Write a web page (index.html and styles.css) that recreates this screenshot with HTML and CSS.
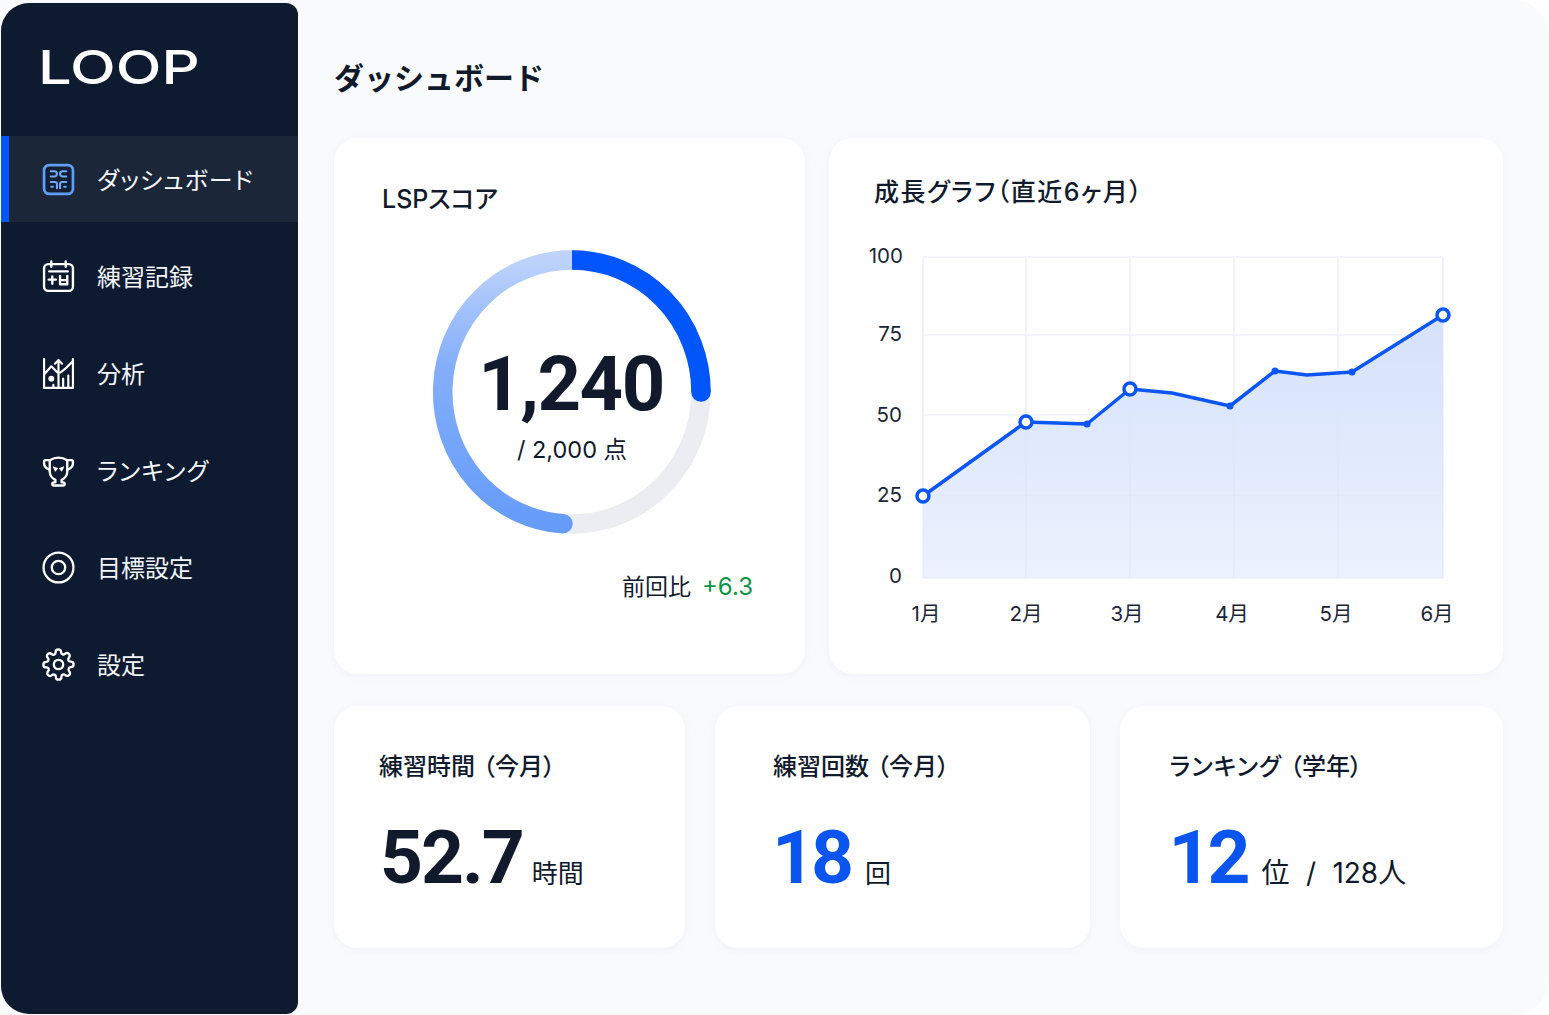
FILE: index.html
```html
<!DOCTYPE html>
<html lang="ja">
<head>
  <meta charset="UTF-8">
  <title>LOOP ダッシュボード</title>
  <link rel="stylesheet" href="styles.css">
</head>
<body>

<div class="app">
  <aside class="sidebar">
    <div class="logo"><span class="logo-text">LOOP</span></div>
    <nav class="nav">
      <a class="nav-item active">
        <svg class="nav-icon" viewBox="0 0 32 32" fill="none" stroke="#6ea8fa" stroke-width="2" stroke-linecap="round">
          <rect x="2" y="2" width="28" height="28" rx="5" fill="#141f33" stroke="#5f9ff8" stroke-width="2.600"/>
          <path d="M8.500 8h3.500a2.500 2.500 0 0 1 0 5H8.500M23.500 8h-3.500a2.500 2.500 0 0 0 0 5h3.500"/>
          <path d="M8.500 18.500h4a2 2 0 0 1 2 2v4M23.500 18.500h-4a2 2 0 0 0-2 2v4M9 23h1.500M23 23h-1.500"/>
        </svg>
        <span class="kana">ダッシュボード</span>
      </a>
      <a class="nav-item">
        <svg class="nav-icon" viewBox="0 0 32 32" fill="none" stroke="#fff" stroke-width="2.300" stroke-linecap="round" stroke-linejoin="round">
          <rect x="2" y="4" width="28" height="26" rx="4"/>
          <path d="M9 1.500v5M23 1.500v5M7 11h18M6.500 19h7M10 16v7M17.500 15.500v8h7v-8M17.500 19.500h7"/>
        </svg>
        <span>練習記録</span>
      </a>
      <a class="nav-item">
        <svg class="nav-icon" viewBox="0 0 32 32" fill="none" stroke="#fff" stroke-width="2.100" stroke-linecap="round" stroke-linejoin="round">
          <path d="M2 2v28h28V2M2 17l7-8 6 6M16 30V3M12.500 6.500L16 3l3.500 3.500M18 15l6-5 6-6"/>
          <circle cx="9" cy="21" r="1.800" fill="#fff"/>
          <path d="M20.500 30V21M25.500 30V18M11 30v-3"/>
        </svg>
        <span>分析</span>
      </a>
      <a class="nav-item">
        <svg class="nav-icon" viewBox="0 0 32 32" fill="none" stroke="#fff" stroke-width="2.300" stroke-linecap="round" stroke-linejoin="round">
          <path d="M7.500 6q8.500-5 17 0v11c0 4-3 7-5.500 8v2.500h1.500a1.500 1.500 0 0 1 0 3h-9a1.500 1.500 0 0 1 0-3H13V25c-2.500-1-5.500-4-5.500-8z"/>
          <path d="M7.500 6H3.500a1.500 1.500 0 0 0-1.500 1.500V9c0 3 2 5 5.500 6.500M24.500 6h4a1.500 1.500 0 0 1 1.500 1.500V9c0 3-2 5-5.500 6.500"/>
          <path d="M11 12.500l4 1.500-2 2.500zM21 12.500l-4 1.500 2 2.500z" fill="#fff" stroke-width="1"/>
        </svg>
        <span class="kana">ランキング</span>
      </a>
      <a class="nav-item">
        <svg class="nav-icon" viewBox="0 0 32 32" fill="none" stroke="#fff" stroke-width="2.200">
          <circle cx="16" cy="16" r="14.500"/>
          <circle cx="16" cy="16" r="6.500"/>
        </svg>
        <span>目標設定</span>
      </a>
      <a class="nav-item">
        <svg class="nav-icon" viewBox="0 0 24 24" fill="none" stroke="#fff" stroke-width="1.700" stroke-linecap="round" stroke-linejoin="round">
          <circle cx="12" cy="12" r="3.400"/>
          <path d="M19.400 15a1.650 1.650 0 0 0 .33 1.820l.06.06a2 2 0 1 1-2.830 2.830l-.06-.06a1.650 1.650 0 0 0-2.800 1.170V21a2 2 0 0 1-4 0v-.09a1.650 1.650 0 0 0-2.800-1.170l-.06.06a2 2 0 1 1-2.830-2.830l.06-.06a1.650 1.650 0 0 0-1.170-2.800H3a2 2 0 0 1 0-4h.09a1.650 1.650 0 0 0 1.170-2.800l-.06-.06a2 2 0 1 1 2.830-2.830l.06.06a1.650 1.650 0 0 0 2.800-1.170V3a2 2 0 0 1 4 0v.09a1.650 1.650 0 0 0 2.800 1.170l.06-.06a2 2 0 1 1 2.830 2.830l-.06.06a1.650 1.650 0 0 0 1.170 2.800H21a2 2 0 0 1 0 4h-.09a1.650 1.650 0 0 0-1.510 1.110z"/>
        </svg>
        <span>設定</span>
      </a>
    </nav>
  </aside>

  <main class="main">
    <h1 class="page-title">ダッシュボード</h1>

    <div class="row-top">
      <section class="card score-card">
        <h2 class="card-title">LSPスコア</h2>
        <div class="ring">
          <svg class="ring-svg" width="280" height="288" viewBox="0 0 280 288" fill="none" stroke-width="19.500">
            <defs>
              <linearGradient id="ringGrad" x1="0" y1="0" x2="0" y2="1">
                <stop offset="0" stop-color="#bdd3fb"/>
                <stop offset="0.4" stop-color="#84aefa"/>
                <stop offset="1" stop-color="#659cfa"/>
              </linearGradient>
            </defs>
            <ellipse cx="140" cy="143" rx="129" ry="132" stroke="#ecedf2"/>
            <path d="M131 274.700A129 132 0 0 1 140 11" stroke="url(#ringGrad)" stroke-linecap="round"/>
            <path d="M140 11A129 132 0 0 1 269 143" stroke="#0055fb"/>
            <circle cx="269" cy="143" r="9.750" fill="#0055fb"/>
          </svg>
          <div class="ring-text">
            <div class="ring-value">1,240</div>
            <div class="ring-max">/ 2,000 点</div>
          </div>
        </div>
        <div class="delta">前回比<span class="delta-num">+6.3</span></div>
      </section>

      <section class="card chart-card">
        <h2 class="card-title">成長グラフ（直近6ヶ月）</h2>
        <svg class="chart" width="674" height="400" viewBox="829 240 674 400">
          <defs>
            <linearGradient id="areaGrad" x1="0" y1="0" x2="0" y2="1">
              <stop offset="0" stop-color="#d5e1fb"/>
              <stop offset="1" stop-color="#ecf2fe"/>
            </linearGradient>
          </defs>
          <path d="M923 496L1026 422L1087 424L1130 389L1172 393L1230 406L1275 371L1307 375L1352 372L1443 315V578H923Z" fill="url(#areaGrad)"/>
          <g stroke="#dfe6f6" stroke-width="1.200" opacity="0.75">
            <path d="M923 257H1443M923 335H1443M923 415H1443M923 495H1443M923 578H1443"/>
            <path d="M923 257V578M1026 257V578M1130 257V578M1234 257V578M1338 257V578M1443 257V578"/>
          </g>
          <path d="M923 496L1026 422L1087 424L1130 389L1172 393L1230 406L1275 371L1307 375L1352 372L1443 315" fill="none" stroke="#0b56f5" stroke-width="3.500" stroke-linejoin="round"/>
          <g fill="#0b56f5">
            <circle cx="1087" cy="424" r="3.500"/>
            <circle cx="1230" cy="406" r="3.500"/>
            <circle cx="1275" cy="371" r="3.500"/>
            <circle cx="1352" cy="372" r="3.500"/>
          </g>
          <g fill="#fff" stroke="#0b56f5" stroke-width="3.500">
            <circle cx="923" cy="496" r="6"/>
            <circle cx="1026" cy="422" r="6"/>
            <circle cx="1130" cy="389" r="6"/>
            <circle cx="1443" cy="315" r="6"/>
          </g>
          <g class="axis-y" text-anchor="end">
            <text x="903" y="263">100</text>
            <text x="902" y="341">75</text>
            <text x="902" y="422">50</text>
            <text x="902" y="502">25</text>
            <text x="902" y="583">0</text>
          </g>
          <g class="axis-x" text-anchor="middle">
            <text x="926" y="621">1月</text>
            <text x="1026" y="621">2月</text>
            <text x="1127" y="621">3月</text>
            <text x="1232" y="621">4月</text>
            <text x="1336" y="621">5月</text>
            <text x="1437" y="621">6月</text>
          </g>
        </svg>
      </section>
    </div>

    <div class="row-bottom">
      <section class="card stat-card">
        <h2 class="stat-title">練習時間<span class="paren">（今月）</span></h2>
        <div class="stat-body"><span class="stat-num">52.7</span><span class="stat-unit">時間</span></div>
      </section>
      <section class="card stat-card stat-two">
        <h2 class="stat-title">練習回数<span class="paren">（今月）</span></h2>
        <div class="stat-body"><span class="stat-num blue">18</span><span class="stat-unit">回</span></div>
      </section>
      <section class="card stat-card stat-three">
        <h2 class="stat-title"><span class="kana">ランキング</span><span class="paren">（学年）</span></h2>
        <div class="stat-body"><span class="stat-num blue">12</span><span class="stat-unit wide">位 / 128人</span></div>
      </section>
    </div>
  </main>
</div>

</body>
</html>
```

FILE: styles.css
```css
* {
  box-sizing: border-box;
}

html, body {
  margin: 0;
  height: 100%;
  background: #fff;
}

body {
  font-family: Inter, "Noto Sans CJK JP", sans-serif;
  font-feature-settings: "palt";
  color: #111a2c;
  overflow: hidden;
}

.kana {
  letter-spacing: 1.1px;
}

.paren {
  padding: 0 4px 0 8px;
}

.app {
  display: flex;
  width: 1549px;
  height: 1015px;
  background: #f9fafc;
  border-radius: 0 36px 36px 0;
  padding: 3px 0 1px 1px;
}

/* sidebar */
.sidebar {
  width: 297px;
  flex-shrink: 0;
  background: #0e1a2f;
  border-radius: 28px 12px 12px 28px;
}

.logo {
  height: 133px;
  padding: 36px 0 0 37px;
  color: #fff;
  font-size: 47px;
  font-weight: 500;
  line-height: 56px;
}

.logo-text {
  display: inline-block;
  transform: scaleX(1.27);
  transform-origin: left center;
}

.nav {
  display: flex;
  flex-direction: column;
  gap: 11px;
}

.nav-item {
  height: 86px;
  display: flex;
  align-items: center;
  gap: 22px;
  padding-left: 41px;
  color: #f4f6fa;
  font-size: 24px;
  line-height: 32px;
  border-left: 0 solid #0055fb;
}

.nav-item span {
  margin-top: 4px;
}

.nav-item.active {
  background: #1b2639;
  border-left-width: 8px;
  padding-left: 33px;
}

.nav-icon {
  width: 33px;
  height: 33px;
  flex-shrink: 0;
}

/* main */
.main {
  flex: 1;
  padding: 0 46px 0 36px;
}

.page-title {
  margin: 0;
  height: 135px;
  padding-top: 53px;
  font-size: 30px;
  line-height: 44px;
  font-weight: 700;
  font-feature-settings: normal;
}

.row-top {
  display: grid;
  grid-template-columns: 471px 674px;
  gap: 24px;
  height: 536px;
  margin-bottom: 32px;
}

.row-bottom {
  display: grid;
  grid-template-columns: 351px 374.5px 383.5px;
  gap: 30px;
  height: 242px;
}

.card {
  background: #fff;
  border-radius: 24px;
  box-shadow: 0 2px 10px rgba(30, 50, 90, 0.04);
}

.card-title {
  margin: 0;
  font-size: 25px;
  line-height: 36px;
  font-weight: 500;
}

/* score */
.score-card {
  padding: 43px 52px 0 48px;
}

.ring {
  display: grid;
  width: 280px;
  margin: 32px 0 0 50px;
}

.ring-svg, .ring-text {
  grid-area: 1 / 1;
}

.ring-text {
  text-align: center;
  padding-top: 90px;
}

.ring-value {
  font-family: Roboto, sans-serif;
  font-size: 76px;
  line-height: 90px;
  font-weight: 700;
  letter-spacing: -1.5px;
  margin-left: -2px;
}

.ring-max {
  font-size: 23.5px;
  line-height: 34px;
  margin-top: 4px;
}

.delta {
  text-align: right;
  font-size: 23px;
  line-height: 34px;
  margin-top: 33px;
}

.delta-num {
  color: #0c9444;
  margin-left: 11px;
  font-size: 24px;
}

/* chart */
.chart-card {
  padding-top: 36px;
  overflow: hidden;
}

.chart-card .card-title {
  padding-left: 45px;
  letter-spacing: 1.5px;
}

.chart {
  display: block;
  margin-top: 30px;
}

.axis-y text, .axis-x text {
  font-size: 20.5px;
  fill: #1c2536;
}

/* stats */
.stat-card {
  padding: 43px 20px 0 45px;
}

.stat-two {
  padding-left: 58px;
}

.stat-three {
  padding-left: 50px;
}

.stat-title {
  margin: 0;
  font-size: 24px;
  line-height: 36px;
  font-weight: 500;
}

.stat-body {
  display: flex;
  align-items: baseline;
  margin-top: 22px;
  padding-left: 1px;
}

.stat-num {
  font-family: Roboto, sans-serif;
  font-size: 75px;
  line-height: 100px;
  font-weight: 700;
  letter-spacing: -2px;
}

.stat-num.blue {
  color: #0a55f0;
  letter-spacing: -4px;
  margin-left: -2px;
}

.stat-unit {
  font-size: 26px;
  margin-left: 9px;
}

.stat-num.blue + .stat-unit {
  margin-left: 15px;
}

.stat-num.blue + .stat-unit.wide {
  font-size: 28px;
  word-spacing: 8.5px;
}
```
